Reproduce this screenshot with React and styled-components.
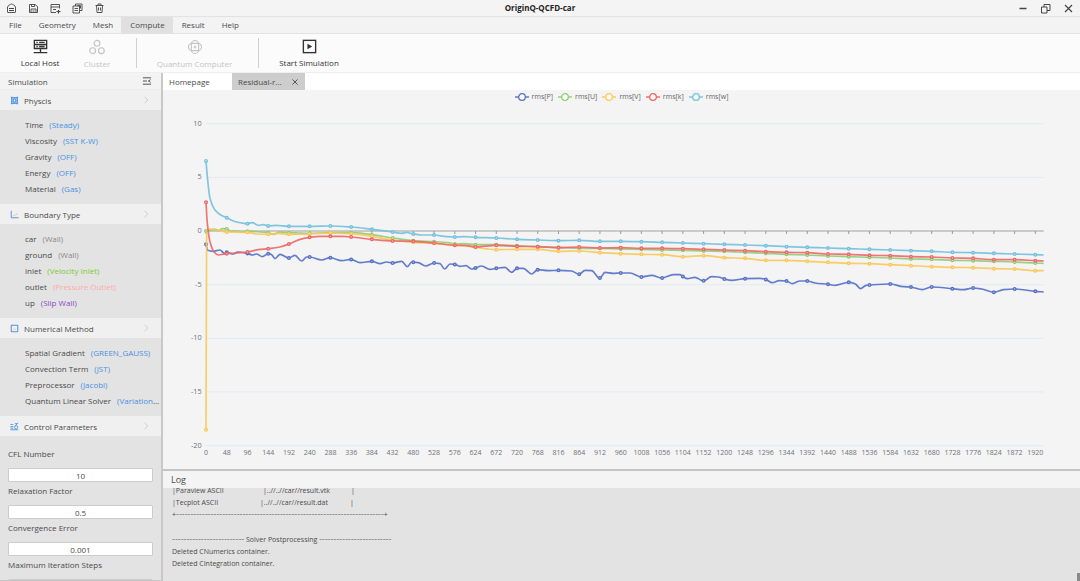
import React from "react";
import styled, { createGlobalStyle } from "styled-components";

const GlobalStyle = createGlobalStyle`
  * {
    box-sizing: border-box;
  }
  body {
    margin: 0;
    font-family: "Open Sans", "Noto Sans", sans-serif;
    font-size: 8px;
    color: #4a4a4a;
    background: #f4f4f4;
  }
  button, input {
    font: inherit;
    color: inherit;
  }
  button {
    padding: 0;
    border: none;
    background: none;
    cursor: pointer;
  }
`;

const Window = styled.div`
  display: flex;
  flex-direction: column;
  height: 100vh;
  overflow: hidden;
`;

const TitleBar = styled.header`
  display: grid;
  grid-template-columns: 1fr auto 1fr;
  align-items: center;
  height: 17px;
  padding: 0 6px;
  background: #f4f4f4;
  border-bottom: 1px solid #e2e2e2;
`;
const QuickActions = styled.div`
  display: flex;
  gap: 11px;
`;
const WindowButtons = styled.div`
  display: flex;
  justify-content: flex-end;
  gap: 12px;
`;
const IconButton = styled.button`
  display: flex;
  align-items: center;
  justify-content: center;
  width: 11px;
  height: 12px;
  color: #444;
`;
const Title = styled.h1`
  margin: 0;
  font-size: 8px;
  line-height: 16px;
  font-weight: 700;
  color: #222;
`;

const MenuBar = styled.nav`
  display: flex;
  height: 17px;
  background: #f3f3f3;
  border-bottom: 1px solid #e2e2e2;
`;
const MenuItem = styled.button`
  padding: 0 8px 0 9px;
  line-height: 16px;
  background: ${(props) => (props.$active ? "#e0e0e0" : "transparent")};
`;

const Toolbar = styled.div`
  display: flex;
  align-items: center;
  height: 39px;
  background: #fbfbfb;
  border-bottom: 1px solid #eee;
`;
const Tool = styled.button`
  display: flex;
  flex-direction: column;
  align-items: center;
  gap: 3px;
  width: ${(props) => props.$width}px;
  padding-top: 2px;
  line-height: 12px;
  white-space: nowrap;
  color: #333;
  &:disabled {
    color: #c4c4c4;
    cursor: default;
  }
`;
const Separator = styled.div`
  width: 1px;
  height: 30px;
  margin-left: ${(props) => props.$space}px;
  background: #d0d0d0;
`;

const Body = styled.div`
  display: flex;
  flex: 1;
  min-height: 0;
`;

const Sidebar = styled.aside`
  display: flex;
  flex-direction: column;
  width: 163px;
  flex-shrink: 0;
  overflow: hidden;
  background: #e3e3e3;
  border-right: 2px solid #c8c8c8;
  border-bottom: 1px solid #c8c8c8;
`;
const SidebarHead = styled.div`
  display: flex;
  align-items: center;
  justify-content: space-between;
  flex-shrink: 0;
  height: 17px;
  padding: 0 9px 0 8px;
  background: #f3f3f3;
  border-bottom: 1px solid #ececec;
`;
const SectionHead = styled.button`
  display: flex;
  align-items: center;
  gap: 5px;
  flex-shrink: 0;
  width: 100%;
  height: 20px;
  padding: 0 11px 0 10px;
  text-align: left;
  background: #f0f0f0;
`;
const SectionName = styled.span`
  flex: 1;
`;
const Items = styled.ul`
  flex-shrink: 0;
  margin: 0;
  padding: 7px 0 7px 25px;
  list-style: none;
`;
const Item = styled.li`
  height: 16px;
  line-height: 16px;
  white-space: nowrap;
  overflow: hidden;
  text-overflow: ellipsis;
`;
const Value = styled.span`
  margin-left: 6px;
  color: ${(props) => props.$color};
`;
const Params = styled.form`
  display: flex;
  flex-direction: column;
  padding: 10px 8px 0;
`;
const ParamLabel = styled.label`
  height: 16px;
  line-height: 16px;
  margin-bottom: 6px;
`;
const ParamInput = styled.input`
  width: 100%;
  height: 14px;
  margin-bottom: 1px;
  padding: 0;
  text-align: center;
  background: #fff;
  border: 1px solid #ccc;
  border-radius: 1px;
`;

const Main = styled.main`
  display: flex;
  flex-direction: column;
  flex: 1;
  min-width: 0;
`;
const Tabs = styled.div`
  display: flex;
  flex-shrink: 0;
  height: 17px;
  background: #fff;
`;
const Tab = styled.div`
  display: flex;
  align-items: center;
  justify-content: space-between;
  width: ${(props) => (props.$active ? 73 : 69)}px;
  padding: 0 5px 0 6px;
  background: ${(props) => (props.$active ? "#cdcdcd" : "#fff")};
`;
const ChartPanel = styled.section`
  display: flex;
  flex-direction: column;
  flex: 1;
  min-height: 0;
`;
const Legend = styled.ul`
  display: flex;
  justify-content: center;
  gap: 5px;
  height: 14px;
  margin: 0;
  padding: 0;
  list-style: none;
`;
const LegendItem = styled.li`
  display: flex;
  align-items: center;
  gap: 3px;
  font-size: 7px;
  line-height: 14px;
  color: #666;
`;
const Plot = styled.svg`
  flex: 1;
  width: 100%;
  min-height: 0;
  display: block;
  text {
    fill: #6e727c;
  }
`;

const LogPanel = styled.section`
  display: flex;
  flex-direction: column;
  height: 112px;
  background: #e3e3e3;
  border-top: 2px solid #c4c4c4;
`;
const LogTitle = styled.h2`
  flex-shrink: 0;
  margin: 0;
  padding-left: 8px;
  font-size: 9px;
  line-height: 17px;
  font-weight: 400;
  background: #f4f4f4;
`;
const LogBody = styled.div`
  position: relative;
  flex: 1;
  padding-left: 9px;
  overflow: hidden;
`;
const ScrollThumb = styled.div`
  position: absolute;
  right: 0;
  bottom: 0;
  width: 3px;
  height: 8px;
  background: #8a8a8a;
`;
const LogLines = styled.div`
  margin-top: -3px;
`;
const LogLine = styled.div`
  height: 12px;
  font-size: 7px;
  line-height: 12px;
  white-space: pre;
`;
const BlankLine = styled.div`
  height: 13px;
`;
const Dashes = styled.span`
  font-family: "DejaVu Sans", sans-serif;
  font-size: 8px;
  color: #777;
`;
const Cell = styled.span`
  display: inline-block;
  width: ${(props) => props.$width}px;
`;

const Icon = ({ size = 11, children, ...rest }) => (
  <svg
    width={size}
    height={size}
    viewBox="0 0 22 22"
    fill="none"
    stroke="currentColor"
    strokeWidth="1.8"
    {...rest}
  >
    {children}
  </svg>
);

const HomeIcon = () => (
  <Icon>
    <path d="M3 8 C3 6 9 2 11 2 C13 2 19 6 19 8 V18 Q19 19 18 19 H4 Q3 19 3 18 Z" />
    <path d="M6 11 H16 M6 15 H16" strokeWidth="2.2" />
  </Icon>
);
const SaveIcon = () => (
  <Icon>
    <path d="M3 3 H14 L19 7 V19 H3 Z M7 3 V7 H13 V3 M6 19 V12 H16 V19 M9 16 H13" />
  </Icon>
);
const NewIcon = () => (
  <Icon>
    <path d="M19 11 V3 H2 V19 H12 M2 8 H19 M6 13 H12" />
    <path d="M17 14 V21 M13 17 H21" strokeWidth="2.4" />
  </Icon>
);
const CopyIcon = () => (
  <Icon>
    <path d="M7 6 V2 H20 V15 H16 M2 6 H15 V20 H2 Z M5 11 H12 M5 15 H12 M11 5 H17 V11" />
  </Icon>
);
const TrashIcon = () => (
  <Icon>
    <path d="M3 5 H19 M8 5 V2 H14 V5 M5 5 L6 19 H16 L17 5 M9 9 V15 M13 9 V15" />
  </Icon>
);
const MinimizeIcon = () => (
  <Icon>
    <path d="M5 11 H19" strokeWidth="3" />
  </Icon>
);
const RestoreIcon = () => (
  <Icon>
    <path d="M3 8 H14 V20 H3 Z M8 8 V3 H20 V15 H14" strokeWidth="2" />
  </Icon>
);
const CloseIcon = ({ size }) => (
  <Icon size={size}>
    <path d="M4 4 L18 18 M18 4 L4 18" strokeWidth="2.4" />
  </Icon>
);

const HostIcon = () => (
  <Icon size={15} strokeWidth="2">
    <path d="M2 2 H20 V8 H2 Z M2 8 H20 V14 H2 Z M11 14 V19 M1 20 H21 M5 5 H7 M5 11 H7 M9 5 H17 M9 11 H17" />
  </Icon>
);
const ClusterIcon = () => (
  <Icon size={16} strokeWidth="1.6">
    <circle cx="11" cy="6" r="4" />
    <circle cx="5" cy="16" r="4" />
    <circle cx="17" cy="16" r="4" />
  </Icon>
);
const QuantumIcon = () => (
  <Icon size={16} strokeWidth="1.5">
    <rect x="6" y="2" width="10" height="18" rx="5" />
    <rect x="2" y="6" width="18" height="10" rx="5" />
    <path d="M11 9 V13 M9 11 H13" />
  </Icon>
);
const StartIcon = () => (
  <Icon size={15} strokeWidth="2">
    <rect x="2" y="2" width="18" height="18" />
    <path d="M8 7 L15 11 L8 15 Z" fill="currentColor" stroke="none" />
  </Icon>
);

const CollapseIcon = () => (
  <Icon size={10} strokeWidth="2">
    <path d="M2 4 H20 M2 11 H11 M2 18 H20 M19 8 L14 11 L19 14" />
  </Icon>
);
const ChevronIcon = () => (
  <Icon size={8} stroke="#c0c0c0" strokeWidth="2">
    <path d="M7 2 L16 11 L7 20" />
  </Icon>
);

const PhysicsIcon = () => (
  <Icon size={9} stroke="#5294e6" strokeWidth="2.6">
    <rect x="4" y="4" width="14" height="14" fill="#a9caf3" />
    <circle cx="11" cy="11" r="3.5" fill="#f0f0f0" />
    <path d="M2 3 H6 M16 3 H20 M2 19 H6 M16 19 H20" />
  </Icon>
);
const BoundaryIcon = () => (
  <Icon size={9} stroke="#5294e6" strokeWidth="2.4">
    <path d="M3 2 V19 H21" />
    <path d="M7 15 L13 12 L19 9" stroke="#f3c58a" />
  </Icon>
);
const MethodIcon = () => (
  <Icon size={9} stroke="#5294e6" strokeWidth="2.6">
    <rect x="3" y="3" width="16" height="16" rx="1" />
    <path d="M7 15 L11 12 L15 13" stroke="#f3c58a" strokeWidth="2" />
  </Icon>
);
const ControlIcon = () => (
  <Icon size={9} stroke="#5294e6" strokeWidth="2.2">
    <path d="M1 6 H8 M1 11 H8 M1 15 H8 M1 19 H20 M12 4 H18 M20 2 L12 10" />
    <circle cx="15" cy="13" r="4" />
  </Icon>
);

const sections = [
  {
    name: "Physcis",
    icon: <PhysicsIcon />,
    items: [
      ["Time", "(Steady)"],
      ["Viscosity", "(SST K-W)"],
      ["Gravity", "(OFF)"],
      ["Energy", "(OFF)"],
      ["Material", "(Gas)"],
    ],
  },
  {
    name: "Boundary Type",
    icon: <BoundaryIcon />,
    items: [
      ["car", "(Wall)", "#8a8a8a"],
      ["ground", "(Wall)", "#8a8a8a"],
      ["inlet", "(Velocity Inlet)", "#7ccb2d"],
      ["outlet", "(Pressure Outlet)", "#ffaaa8"],
      ["up", "(Slip Wall)", "#8f4bc0"],
    ],
  },
  {
    name: "Numerical Method",
    icon: <MethodIcon />,
    items: [
      ["Spatial Gradient", "(GREEN_GAUSS)"],
      ["Convection Term", "(JST)"],
      ["Preprocessor", "(Jacobi)"],
      ["Quantum Linear Solver", "(Variational)"],
    ],
  },
];

const params = [
  ["cfl", "CFL Number", "10"],
  ["relaxation", "Relaxation Factor", "0.5"],
  ["convergence", "Convergence Error", "0.001"],
  ["iterations", "Maximum Iteration Steps", ""],
];

// Plot units: origin on the zero axis, y grows downwards.
const STEP = 62.2;
const PLOT_END = 2513;
const FIVE = 161;

// `head` holds [x, y] points, `tail` one y per tick from tick 13 up to the right edge
const series = [
  {
    name: "rms[P]",
    color: "#5470c6",
    head: [
      [0, 40], [5, 58], [22, 61], [42, 57], [55, 67], [62, 64], [82, 69], [95, 63], [124, 67],
      [139, 72], [152, 69], [169, 77], [187, 68], [197, 71], [207, 83], [222, 70], [249, 81],
      [267, 73], [287, 90], [302, 78], [311, 78], [347, 87], [373, 80], [407, 89], [435, 85],
      [462, 95], [498, 91], [522, 98], [542, 93], [560, 96], [587, 91], [604, 107], [617, 93],
      [637, 95], [659, 105], [684, 96], [702, 98], [716, 114], [732, 99], [746, 100], [762, 106],
      [780, 104], [797, 114], [808, 111], [827, 105], [852, 115], [871, 112], [897, 109],
      [917, 124], [933, 112], [952, 112], [977, 129], [995, 116], [1027, 119], [1057, 118],
      [1097, 120], [1119, 130], [1137, 118], [1157, 119], [1181, 142], [1197, 124], [1222, 127],
      [1243, 126], [1272, 126], [1306, 138], [1337, 133], [1368, 141], [1402, 131], [1422, 131],
      [1430, 136], [1444, 143], [1467, 139], [1492, 150], [1517, 137], [1537, 138], [1555, 144],
      [1577, 148], [1617, 143], [1662, 142], [1679, 145], [1699, 155], [1719, 149], [1741, 150],
      [1759, 158], [1782, 150], [1803, 150], [1827, 156], [1866, 160], [1887, 163], [1928, 154],
      [1947, 158], [1964, 173], [1980, 163], [1990, 162], [2052, 159], [2092, 167], [2114, 168],
      [2149, 176], [2177, 168], [2239, 173], [2272, 176], [2301, 171], [2327, 174], [2363, 184],
      [2392, 176], [2425, 174], [2488, 181], [2513, 183],
    ],
    tail: [],
  },
  {
    name: "rms[U]",
    color: "#91cc75",
    head: [
      [0, 0], [27, -5], [39, -1], [49, -7], [62, -6], [75, 1], [92, 0], [107, 3], [124, 1],
      [187, 5], [202, 10], [222, 3], [249, 5], [277, 6], [311, 7], [373, 5], [435, 5], [498, 11],
      [560, 21], [622, 29], [684, 32], [727, 35], [746, 39], [777, 38],
    ],
    tail: [
      41, 41, 44, 47, 49, 52, 52, 54, 55, 57, 58, 60, 61, 64, 67, 70, 72, 75, 77, 79, 81, 84, 85,
      88, 89, 91, 93, 96, 97,
    ],
  },
  {
    name: "rms[V]",
    color: "#fac858",
    head: [
      [0, 596], [2, 0], [7, -6], [27, -5], [62, 3], [124, 4], [152, 9], [187, 10], [212, 7],
      [249, 10], [311, 9], [373, 6], [435, 8], [498, 16], [560, 27], [622, 34], [684, 37],
      [746, 42], [777, 45],
    ],
    tail: [
      49, 56, 55, 55, 61, 60, 65, 68, 70, 71, 77, 74, 80, 82, 88, 88, 91, 94, 97, 98, 101, 104,
      107, 109, 110, 113, 114, 119, 119,
    ],
  },
  {
    name: "rms[k]",
    color: "#ee6666",
    head: [
      [0, -86], [4, -23], [12, 32], [24, 62], [37, 72], [62, 68], [92, 66], [124, 63], [157, 56],
      [187, 53], [222, 48], [249, 39], [282, 25], [311, 19], [342, 16], [373, 16], [407, 16],
      [435, 18], [498, 25], [560, 30], [622, 31], [684, 36], [746, 43], [777, 43],
    ],
    tail: [
      48, 43, 46, 47, 50, 48, 51, 50, 52, 52, 53, 55, 57, 59, 62, 64, 65, 69, 70, 73, 74, 77, 78,
      81, 82, 86, 86, 89, 90,
    ],
  },
  {
    name: "rms[w]",
    color: "#73c0de",
    head: [
      [0, -210], [4, -163], [12, -98], [27, -63], [44, -48], [62, -40], [82, -30], [107, -24],
      [124, -22], [139, -25], [157, -17], [172, -19], [187, -15], [212, -17], [249, -14],
      [311, -14], [373, -15], [435, -12], [498, -5], [560, 3], [587, 7], [602, 4], [622, 9],
      [652, 12], [684, 12], [722, 17], [746, 18], [777, 17],
    ],
    tail: [
      19, 21, 25, 27, 29, 28, 31, 31, 32, 34, 36, 38, 40, 42, 44, 47, 49, 51, 53, 55, 57, 59, 61,
      64, 65, 67, 69, 71, 72,
    ],
  },
];

const pointsOf = ({ head, tail }) => [
  ...head,
  ...tail.map((y, i) => [Math.min((13 + i) * STEP, PLOT_END), y]),
];

// monotone cubic, so the curve does not overshoot its points
const smoothPath = (pts) => {
  const slopes = pts.slice(1).map((p, i) => (p[1] - pts[i][1]) / (p[0] - pts[i][0]));
  const tangents = pts.map((_, i) => {
    const a = slopes[i - 1];
    const b = slopes[i];
    if (a === undefined) return b;
    if (b === undefined) return a;
    return a * b <= 0 ? 0 : (2 * a * b) / (a + b);
  });
  return pts.slice(1).reduce((d, [x, y], i) => {
    const [px, py] = pts[i];
    const dx = (x - px) / 3;
    return `${d} C${px + dx} ${py + dx * tangents[i]} ${x - dx} ${y - dx * tangents[i + 1]} ${x} ${y}`;
  }, `M${pts[0][0]} ${pts[0][1]}`);
};

const valueAt = (pts, x) => {
  const i = pts.findIndex((p) => p[0] >= x);
  if (i <= 0) return pts[0][1];
  const [x0, y0] = pts[i - 1];
  const [x1, y1] = pts[i];
  return y0 + ((y1 - y0) * (x - x0)) / (x1 - x0);
};

const ticks = Array.from({ length: 41 }, (_, i) => i);

const ResidualChart = () => (
  <ChartPanel>
    <Legend>
      {series.map((s) => (
        <LegendItem key={s.name}>
          <svg width="14" height="8" viewBox="0 0 14 8" stroke={s.color}>
            <path d="M0 4 H14" strokeWidth="1.4" />
            <circle cx="7" cy="4" r="3.3" fill="#fff" strokeWidth="1.3" />
          </svg>
          {s.name}
        </LegendItem>
      ))}
    </Legend>
    <Plot viewBox="-129 -381 2751 1095">
      {[10, 5, 0, -5, -10, -15, -20].map((v) => (
        <g key={v}>
          <path
            d={`M0 ${(-v / 5) * FIVE} H${PLOT_END}`}
            stroke={v === 0 ? "#bdbdbd" : "#e6e9f2"}
            strokeWidth={v === 0 ? 5 : 3}
          />
          <text x="-13" y={(-v / 5) * FIVE + 6} fontSize="22" textAnchor="end">
            {v}
          </text>
        </g>
      ))}
      {ticks.map((t) => (
        <g key={t}>
          <path d={`M${t * STEP} 0 V9`} stroke="#999" strokeWidth="3" />
          <text x={t * STEP} y="673" fontSize="21" textAnchor="middle">
            {t * 48}
          </text>
        </g>
      ))}
      {series.map((s) => {
        const pts = pointsOf(s);
        return (
          <g key={s.name} stroke={s.color} fill="none">
            <path d={smoothPath(pts)} strokeWidth="5" strokeOpacity="0.9" />
            {ticks.map((t) => (
              <circle
                key={t}
                cx={t * STEP}
                cy={valueAt(pts, t * STEP)}
                r="4"
                fill="#fff"
                fillOpacity="0.5"
                strokeWidth="4"
              />
            ))}
          </g>
        );
      })}
    </Plot>
  </ChartPanel>
);

const Log = () => (
  <LogPanel>
    <LogTitle>Log</LogTitle>
    <LogBody>
      <LogLines>
        <LogLine>
          <Cell $width={91}>|Paraview ASCII</Cell>
          <Cell $width={88}>|..//..//car//result.vtk</Cell>|
        </LogLine>
        <LogLine>
          <Cell $width={88}>|Tecplot ASCII</Cell>
          <Cell $width={90}>|..//..//car//result.dat</Cell>|
        </LogLine>
        <LogLine>
          +<Dashes>{"-".repeat(72)}</Dashes>+
        </LogLine>
        <BlankLine />
        <LogLine>
          <Dashes>{"-".repeat(25)}</Dashes> Solver Postprocessing <Dashes>{"-".repeat(25)}</Dashes>
        </LogLine>
        <LogLine>Deleted CNumerics container.</LogLine>
        <LogLine>Deleted CIntegration container.</LogLine>
      </LogLines>
      <ScrollThumb />
    </LogBody>
  </LogPanel>
);

const App = () => {
  return (
    <Window>
      <GlobalStyle />
      <TitleBar>
        <QuickActions>
          <IconButton aria-label="Home"><HomeIcon /></IconButton>
          <IconButton aria-label="Save"><SaveIcon /></IconButton>
          <IconButton aria-label="New"><NewIcon /></IconButton>
          <IconButton aria-label="Copy"><CopyIcon /></IconButton>
          <IconButton aria-label="Delete"><TrashIcon /></IconButton>
        </QuickActions>
        <Title>OriginQ-QCFD-car</Title>
        <WindowButtons>
          <IconButton aria-label="Minimize"><MinimizeIcon /></IconButton>
          <IconButton aria-label="Restore"><RestoreIcon /></IconButton>
          <IconButton aria-label="Close"><CloseIcon /></IconButton>
        </WindowButtons>
      </TitleBar>
      <MenuBar>
        {["File", "Geometry", "Mesh", "Compute", "Result", "Help"].map((name) => (
          <MenuItem key={name} $active={name === "Compute"}>
            {name}
          </MenuItem>
        ))}
      </MenuBar>
      <Toolbar>
        <Tool $width={80}><HostIcon />Local Host</Tool>
        <Tool $width={34} disabled><ClusterIcon />Cluster</Tool>
        <Separator $space={22} />
        <Tool $width={115} disabled><QuantumIcon />Quantum Computer</Tool>
        <Separator $space={6} />
        <Tool $width={100}><StartIcon />Start Simulation</Tool>
      </Toolbar>
      <Body>
        <Sidebar>
          <SidebarHead>
            Simulation
            <IconButton aria-label="Collapse"><CollapseIcon /></IconButton>
          </SidebarHead>
          {sections.map((section) => (
            <React.Fragment key={section.name}>
              <SectionHead>
                {section.icon}
                <SectionName>{section.name}</SectionName>
                <ChevronIcon />
              </SectionHead>
              <Items>
                {section.items.map(([name, value, color = "#4a90e2"]) => (
                  <Item key={name}>
                    {name}
                    <Value $color={color}>{value}</Value>
                  </Item>
                ))}
              </Items>
            </React.Fragment>
          ))}
          <SectionHead>
            <ControlIcon />
            <SectionName>Control Parameters</SectionName>
            <ChevronIcon />
          </SectionHead>
          <Params>
            {params.map(([id, label, value]) => (
              <React.Fragment key={id}>
                <ParamLabel htmlFor={id}>{label}</ParamLabel>
                <ParamInput id={id} defaultValue={value} />
              </React.Fragment>
            ))}
          </Params>
        </Sidebar>
        <Main>
          <Tabs>
            <Tab>Homepage</Tab>
            <Tab $active>
              Residual-r...
              <IconButton aria-label="Close tab"><CloseIcon size={8} /></IconButton>
            </Tab>
          </Tabs>
          <ResidualChart />
          <Log />
        </Main>
      </Body>
    </Window>
  );
};

export default App;
